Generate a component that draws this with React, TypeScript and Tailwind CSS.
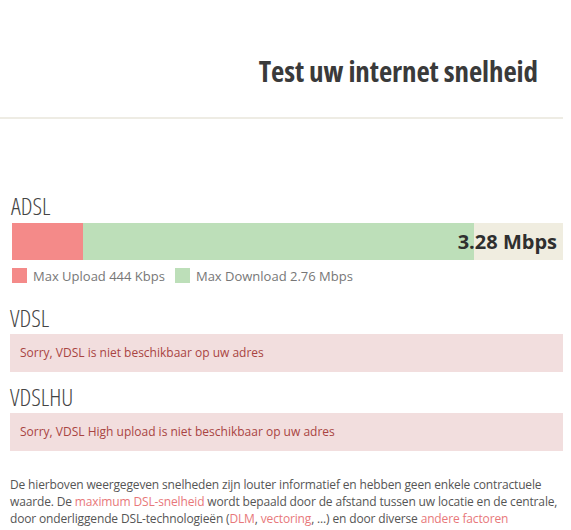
import React from "react";

export default function App() {
  return (
    <div className="w-[571px] h-[530px] bg-white overflow-hidden text-[#555]" style={{ fontFamily: '"Open Sans", "Liberation Sans", sans-serif' }}>
      <div className="w-[563px] border-b-2 border-[#eeece4] h-[119px] flex justify-end pr-[25px] pt-[53px]">
        <h1 className="text-[29px] leading-[36px] font-bold text-[#3a3a3a] font-stretch-condensed tracking-[-0.1px]">Test uw internet snelheid</h1>
      </div>
      <div className="pl-[10px] w-[563px]">
        <div className="mt-[72px] text-[24px] leading-[30px] font-light font-stretch-condensed text-[#444] pl-[1px]">ADSL</div>
        <div className="ml-[2px] mt-[2px] h-[37px] flex bg-[#f0ede0] relative">
          <div className="w-[71px] bg-[#f48a89]" />
          <div className="w-[391px] bg-[#bddfb9]" />
          <div className="absolute right-[6px] top-0 h-full flex items-center text-[20px] font-bold text-[#2f2f2f]">3.28 Mbps</div>
        </div>
        <div className="ml-[2px] mt-[5px] flex items-center text-[13px] leading-[20px] text-[#777]">
          <span className="w-[15px] h-[15px] bg-[#f48a89] mr-[6px]" />
          <span className="mt-[1px]">Max Upload 444 Kbps</span>
          <span className="w-[15px] h-[15px] bg-[#bddfb9] ml-[10px] mr-[6px]" />
          <span className="mt-[1px]">Max Download 2.76 Mbps</span>
        </div>
        <div className="mt-[17px] text-[24px] leading-[30px] font-light font-stretch-condensed text-[#444]">VDSL</div>
        <div className="h-[38px] bg-[#f2dede] text-[#a94442] text-[12px] flex items-center pl-[10px] mt-[1px]">Sorry, VDSL is niet beschikbaar op uw adres</div>
        <div className="mt-[10px] text-[24px] leading-[30px] font-light font-stretch-condensed text-[#444]">VDSLHU</div>
        <div className="h-[38px] bg-[#f2dede] text-[#a94442] text-[12px] flex items-center pl-[10px] mt-[1px]">Sorry, VDSL High upload is niet beschikbaar op uw adres</div>
        <p className="mt-[25px] text-[12px] leading-[17px] text-[#555] tracking-[-0.15px] w-[556px]">
          De hierboven weergegeven snelheden zijn louter informatief en hebben geen enkele contractuele waarde. De <span className="text-[#e8787a]">maximum DSL-snelheid</span> wordt bepaald door de afstand tussen uw locatie en de centrale, door onderliggende DSL-technologieën (<span className="text-[#e8787a]">DLM</span>, <span className="text-[#e8787a]">vectoring</span>, ...) en door diverse <span className="text-[#e8787a]">andere factoren</span>
        </p>
      </div>
    </div>
  );
}
